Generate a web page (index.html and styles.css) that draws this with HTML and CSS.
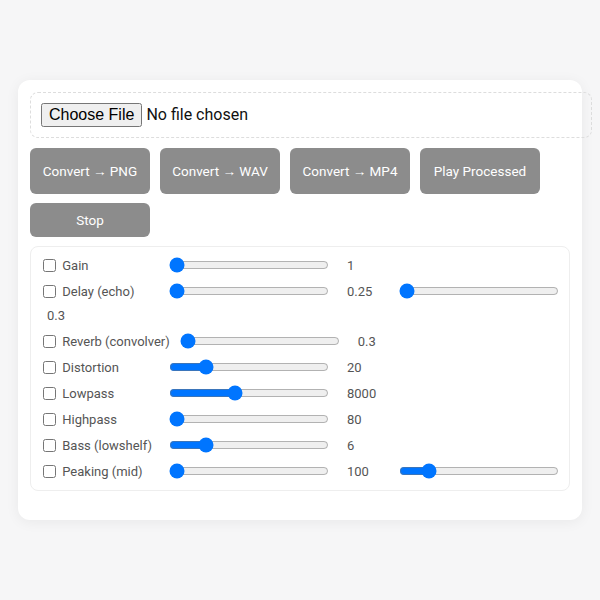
FILE: index.html
```html
<!DOCTYPE html>
<html>
<head>
  <title>Audio Converter</title>
  <link rel="stylesheet" href="styles.css">
</head>
<body>
  <div class="card">
    <div class="file-box">
      <input type="file" id="file">
    </div>

    <div class="actions">
      <button class="btn big">Convert &rarr; PNG</button>
      <button class="btn big">Convert &rarr; WAV</button>
      <button class="btn big">Convert &rarr; MP4</button>
      <button class="btn big">Play Processed</button>
      <button class="btn">Stop</button>
    </div>

    <div class="effects">
      <div class="row">
        <label class="name"><input type="checkbox"> Gain</label>
        <input type="range" min="1" max="4" step="0.1" value="1">
        <span class="val">1</span>
      </div>
      <div class="row">
        <label class="name"><input type="checkbox"> Delay (echo)</label>
        <input type="range" min="0.25" max="2" step="0.05" value="0.25">
        <span class="val">0.25</span>
        <input type="range" min="0.3" max="0.9" step="0.05" value="0.3">
        <span class="val">0.3</span>
      </div>
      <div class="row">
        <label class="name"><input type="checkbox"> Reverb (convolver)</label>
        <input type="range" min="0.3" max="4" step="0.1" value="0.3">
        <span class="val">0.3</span>
      </div>
      <div class="row">
        <label class="name"><input type="checkbox"> Distortion</label>
        <input type="range" min="0" max="100" value="20">
        <span class="val">20</span>
      </div>
      <div class="row">
        <label class="name"><input type="checkbox"> Lowpass</label>
        <input type="range" min="0" max="20000" value="8000">
        <span class="val">8000</span>
      </div>
      <div class="row">
        <label class="name"><input type="checkbox"> Highpass</label>
        <input type="range" min="80" max="5000" value="80">
        <span class="val">80</span>
      </div>
      <div class="row">
        <label class="name"><input type="checkbox"> Bass (lowshelf)</label>
        <input type="range" min="0" max="30" value="6">
        <span class="val">6</span>
      </div>
      <div class="row">
        <label class="name"><input type="checkbox"> Peaking (mid)</label>
        <input type="range" min="100" max="8000" value="100">
        <span class="val">100</span>
        <input type="range" min="0" max="100" value="15">
        <span class="val">1.5</span>
      </div>
    </div>
  </div>
</body>
</html>
```

FILE: styles.css
```css
body {
  margin: 0;
  padding: 80px 18px;
  background-color: #f6f6f7;
  font-family: Roboto, 'Noto Sans', sans-serif;
  color: #555;
}
.card {
  background: #fff;
  border-radius: 12px;
  box-shadow: 0 2px 14px rgba(0, 0, 0, 0.06);
  padding: 12px 12px 29px;
}
.file-box {
  width: 100%;
  padding: 10px;
  border: 1px dashed #ddd;
  border-radius: 8px;
  margin-bottom: 10px;
}
.file-box input {
  font-family: Roboto, 'Noto Sans', sans-serif;
  font-size: 16px;
  color: #111;
  display: block;
  height: 24px;
}
.actions {
  display: flex;
  flex-wrap: wrap;
  align-items: flex-start;
  gap: 9px 10px;
  margin-bottom: 9px;
}
.btn {
  width: 120px;
  height: 34px;
  background-color: #8c8c8c;
  color: #fff;
  border: none;
  border-radius: 6px;
  font-family: Roboto, 'Noto Sans', sans-serif;
  font-size: 13.5px;
  cursor: pointer;
}
.btn.big {
  height: 46px;
}
.effects {
  box-sizing: border-box;
  height: 245px;
  overflow: hidden;
  border: 1px solid #eee;
  border-radius: 8px;
  padding: 8px;
}
.row {
  display: flex;
  flex-wrap: wrap;
  align-items: center;
  gap: 4px 8px;
  min-height: 20px;
  margin-bottom: 6px;
  font-size: 13px;
}
.row > * {
  min-height: 20px;
  display: flex;
  align-items: center;
}
.name {
  min-width: 120px;
  flex-shrink: 0;
  white-space: pre;
}
.name input {
  margin: 0 3px 0 4px;
}
.row input[type="range"] {
  width: 160px;
  margin: 0 2px;
}
.val {
  box-sizing: border-box;
  min-width: 50px;
  padding-left: 8px;
}
```
